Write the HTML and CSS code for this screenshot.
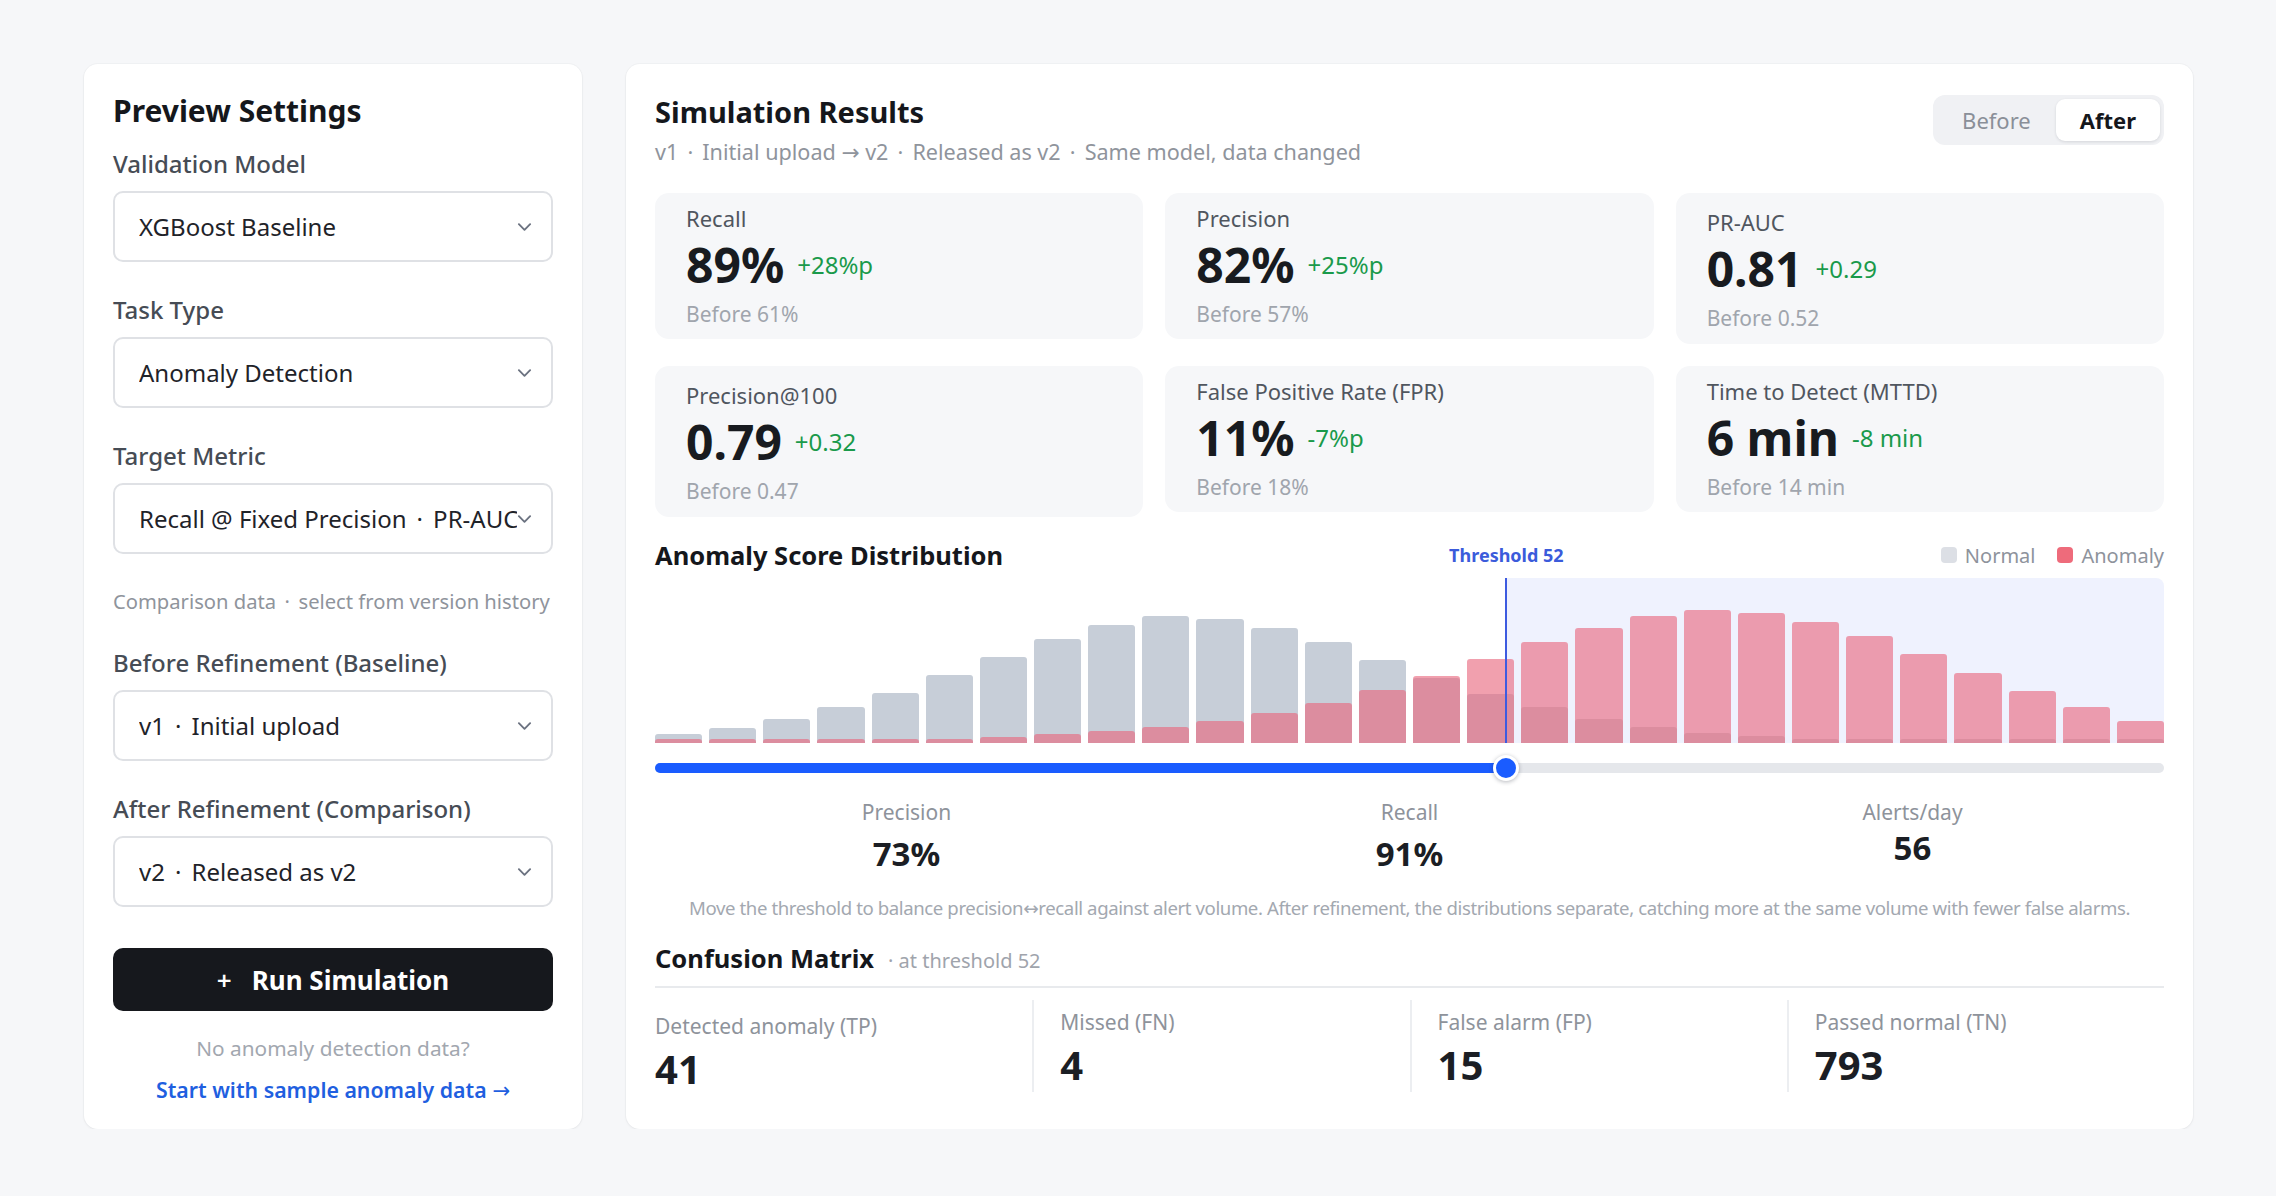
FILE: index.html
```html
<!DOCTYPE html>
<html lang="en">
<head>
<meta charset="utf-8">
<title>Simulation Preview</title>
<link rel="stylesheet" href="styles.css">
</head>
<body>
<div class="page">
  <aside class="panel settings">
    <h2 class="panel-title">Preview Settings</h2>

    <div class="field">
      <div class="field-label">Validation Model</div>
      <div class="select"><span class="select-value">XGBoost Baseline</span><svg class="chevron" viewBox="0 0 16 10"><path d="M2 2l6 6 6-6"/></svg></div>
    </div>
    <div class="field">
      <div class="field-label">Task Type</div>
      <div class="select"><span class="select-value">Anomaly Detection</span><svg class="chevron" viewBox="0 0 16 10"><path d="M2 2l6 6 6-6"/></svg></div>
    </div>
    <div class="field">
      <div class="field-label">Target Metric</div>
      <div class="select"><span class="select-value">Recall @ Fixed Precision <span class="sep">·</span> PR-AUC</span><svg class="chevron" viewBox="0 0 16 10"><path d="M2 2l6 6 6-6"/></svg></div>
    </div>

    <p class="hint">Comparison data <span class="sep">·</span> select from version history</p>

    <div class="field">
      <div class="field-label">Before Refinement (Baseline)</div>
      <div class="select"><span class="select-value">v1 <span class="sep">·</span> Initial upload</span><svg class="chevron" viewBox="0 0 16 10"><path d="M2 2l6 6 6-6"/></svg></div>
    </div>
    <div class="field">
      <div class="field-label">After Refinement (Comparison)</div>
      <div class="select"><span class="select-value">v2 <span class="sep">·</span> Released as v2</span><svg class="chevron" viewBox="0 0 16 10"><path d="M2 2l6 6 6-6"/></svg></div>
    </div>

    <button class="run-btn" type="button"><span class="run-plus">+</span>Run Simulation</button>
    <p class="empty-note">No anomaly detection data?</p>
    <a class="sample-link" href="#">Start with sample anomaly data <span class="arrow">→</span></a>
  </aside>

  <main class="panel results">
    <header class="results-head">
      <div>
        <h2 class="results-title">Simulation Results</h2>
        <p class="results-sub">v1 <span class="sep">·</span> Initial upload <span class="arrow">→</span> v2 <span class="sep">·</span> Released as v2 <span class="sep">·</span> Same model, data changed</p>
      </div>
      <div class="toggle">
        <span class="toggle-item">Before</span>
        <span class="toggle-item active">After</span>
      </div>
    </header>

    <div class="metrics">
      <div class="metric">
        <div class="metric-label">Recall</div>
        <div class="metric-main"><span class="metric-value">89%</span><span class="metric-delta">+28%p</span></div>
        <div class="metric-before">Before 61%</div>
      </div>
      <div class="metric">
        <div class="metric-label">Precision</div>
        <div class="metric-main"><span class="metric-value">82%</span><span class="metric-delta">+25%p</span></div>
        <div class="metric-before">Before 57%</div>
      </div>
      <div class="metric tall">
        <div class="metric-label">PR-AUC</div>
        <div class="metric-main"><span class="metric-value">0.81</span><span class="metric-delta">+0.29</span></div>
        <div class="metric-before">Before 0.52</div>
      </div>
      <div class="metric tall">
        <div class="metric-label">Precision@100</div>
        <div class="metric-main"><span class="metric-value">0.79</span><span class="metric-delta">+0.32</span></div>
        <div class="metric-before">Before 0.47</div>
      </div>
      <div class="metric">
        <div class="metric-label">False Positive Rate (FPR)</div>
        <div class="metric-main"><span class="metric-value">11%</span><span class="metric-delta">-7%p</span></div>
        <div class="metric-before">Before 18%</div>
      </div>
      <div class="metric">
        <div class="metric-label">Time to Detect (MTTD)</div>
        <div class="metric-main"><span class="metric-value">6 min</span><span class="metric-delta">-8 min</span></div>
        <div class="metric-before">Before 14 min</div>
      </div>
    </div>

    <section class="dist">
      <div class="dist-head">
        <h3 class="section-title">Anomaly Score Distribution</h3>
        <span class="threshold-label" style="left:56.42%">Threshold 52</span>
        <div class="legend">
          <span class="legend-item"><i class="swatch swatch-normal"></i>Normal</span>
          <span class="legend-item"><i class="swatch swatch-anomaly"></i>Anomaly</span>
        </div>
      </div>

      <div class="chart">
        <div class="chart-zone" style="left:56.42%"></div>
        <div class="bins">
          <div class="bin"><div class="bar bar-normal" style="height:9px"></div><div class="bar bar-anomaly" style="height:4px"></div></div>
          <div class="bin"><div class="bar bar-normal" style="height:15px"></div><div class="bar bar-anomaly" style="height:4px"></div></div>
          <div class="bin"><div class="bar bar-normal" style="height:24px"></div><div class="bar bar-anomaly" style="height:4px"></div></div>
          <div class="bin"><div class="bar bar-normal" style="height:36px"></div><div class="bar bar-anomaly" style="height:4px"></div></div>
          <div class="bin"><div class="bar bar-normal" style="height:50px"></div><div class="bar bar-anomaly" style="height:4px"></div></div>
          <div class="bin"><div class="bar bar-normal" style="height:68px"></div><div class="bar bar-anomaly" style="height:4px"></div></div>
          <div class="bin"><div class="bar bar-normal" style="height:86px"></div><div class="bar bar-anomaly" style="height:6px"></div></div>
          <div class="bin"><div class="bar bar-normal" style="height:104px"></div><div class="bar bar-anomaly" style="height:9px"></div></div>
          <div class="bin"><div class="bar bar-normal" style="height:118px"></div><div class="bar bar-anomaly" style="height:12px"></div></div>
          <div class="bin"><div class="bar bar-normal" style="height:127px"></div><div class="bar bar-anomaly" style="height:16px"></div></div>
          <div class="bin"><div class="bar bar-normal" style="height:124px"></div><div class="bar bar-anomaly" style="height:22px"></div></div>
          <div class="bin"><div class="bar bar-normal" style="height:115px"></div><div class="bar bar-anomaly" style="height:30px"></div></div>
          <div class="bin"><div class="bar bar-normal" style="height:101px"></div><div class="bar bar-anomaly" style="height:40px"></div></div>
          <div class="bin"><div class="bar bar-normal" style="height:83px"></div><div class="bar bar-anomaly" style="height:53px"></div></div>
          <div class="bin"><div class="bar bar-normal" style="height:65px"></div><div class="bar bar-anomaly" style="height:67px"></div></div>
          <div class="bin"><div class="bar bar-normal" style="height:49px"></div><div class="bar bar-anomaly" style="height:84px"></div></div>
          <div class="bin"><div class="bar bar-normal" style="height:36px"></div><div class="bar bar-anomaly" style="height:101px"></div></div>
          <div class="bin"><div class="bar bar-normal" style="height:24px"></div><div class="bar bar-anomaly" style="height:115px"></div></div>
          <div class="bin"><div class="bar bar-normal" style="height:16px"></div><div class="bar bar-anomaly" style="height:127px"></div></div>
          <div class="bin"><div class="bar bar-normal" style="height:10px"></div><div class="bar bar-anomaly" style="height:133px"></div></div>
          <div class="bin"><div class="bar bar-normal" style="height:7px"></div><div class="bar bar-anomaly" style="height:130px"></div></div>
          <div class="bin"><div class="bar bar-normal" style="height:4px"></div><div class="bar bar-anomaly" style="height:121px"></div></div>
          <div class="bin"><div class="bar bar-normal" style="height:4px"></div><div class="bar bar-anomaly" style="height:107px"></div></div>
          <div class="bin"><div class="bar bar-normal" style="height:4px"></div><div class="bar bar-anomaly" style="height:89px"></div></div>
          <div class="bin"><div class="bar bar-normal" style="height:4px"></div><div class="bar bar-anomaly" style="height:70px"></div></div>
          <div class="bin"><div class="bar bar-normal" style="height:4px"></div><div class="bar bar-anomaly" style="height:52px"></div></div>
          <div class="bin"><div class="bar bar-normal" style="height:4px"></div><div class="bar bar-anomaly" style="height:36px"></div></div>
          <div class="bin"><div class="bar bar-normal" style="height:4px"></div><div class="bar bar-anomaly" style="height:22px"></div></div>
        </div>
        <div class="threshold-line" style="left:56.42%"></div>
      </div>

      <div class="slider">
        <div class="slider-track"></div>
        <div class="slider-fill" style="width:56.42%"></div>
        <div class="slider-thumb" style="left:56.42%"></div>
      </div>

      <div class="stats">
        <div class="stat"><div class="stat-label">Precision</div><div class="stat-value">73%</div></div>
        <div class="stat"><div class="stat-label">Recall</div><div class="stat-value">91%</div></div>
        <div class="stat"><div class="stat-label">Alerts/day</div><div class="stat-value plain">56</div></div>
      </div>

      <p class="dist-note">Move the threshold to balance precision<span class="arrow">↔</span>recall against alert volume. After refinement, the distributions separate, catching more at the same volume with fewer false alarms.</p>
    </section>

    <section class="matrix">
      <div class="matrix-head">
        <h3 class="section-title">Confusion Matrix</h3>
        <span class="matrix-sub">· at threshold 52</span>
      </div>
      <div class="matrix-grid">
        <div class="cell first"><div class="cell-label">Detected anomaly (TP)</div><div class="cell-value">41</div></div>
        <div class="cell"><div class="cell-label">Missed (FN)</div><div class="cell-value">4</div></div>
        <div class="cell"><div class="cell-label">False alarm (FP)</div><div class="cell-value">15</div></div>
        <div class="cell"><div class="cell-label">Passed normal (TN)</div><div class="cell-value">793</div></div>
      </div>
    </section>
  </main>
</div>
</body>
</html>
```

FILE: styles.css
```css
* {
  box-sizing: border-box;
  margin: 0;
  padding: 0;
}

body {
  background: #f6f7f9;
  font-family: "Noto Sans", "Open Sans", sans-serif;
  color: #1b1e24;
}

/* separators and arrows inside running text */
.sep {
  margin: 0 0.16em;
}

.arrow {
  font-family: "DejaVu Sans", sans-serif;
  font-weight: 400;
}

/* two-panel layout */
.page {
  display: flex;
  gap: 44px;
  height: 1129px;
  padding: 64px 83px 0 84px;
}

.panel {
  background: #ffffff;
  border-radius: 14px;
  box-shadow: 0 1px 3px rgba(16, 24, 40, 0.05), 0 0 0 1px rgba(16, 24, 40, 0.025);
}

/* ---------- settings panel ---------- */
.settings {
  width: 498px;
  flex: none;
  display: flex;
  flex-direction: column;
  padding: 27px 29px 0;
}

.panel-title {
  font-size: 30px;
  line-height: 40px;
  font-weight: 700;
  color: #15171c;
  margin-bottom: 17px;
}

.field {
  margin-bottom: 32px;
}

.field-label {
  font-size: 24px;
  line-height: 32px;
  font-weight: 500;
  color: #464c55;
  margin-bottom: 11px;
}

.select {
  height: 71px;
  border: 2px solid #dfe1e5;
  border-radius: 10px;
  display: flex;
  align-items: center;
  padding: 0 19px 0 24px;
}

.select-value {
  flex: 1;
  font-size: 24px;
  color: #1f2329;
  white-space: nowrap;
  overflow: hidden;
}

.chevron {
  width: 15px;
  height: 10px;
  flex: none;
  fill: none;
  stroke: #6b7280;
  stroke-width: 2;
  stroke-linecap: round;
  stroke-linejoin: round;
}

.hint {
  font-size: 20.2px;
  line-height: 28px;
  color: #8f949c;
  margin-top: 1px;
  margin-bottom: 32px;
}

.run-btn {
  margin-top: 9px;
  height: 63px;
  border: none;
  border-radius: 10px;
  background: #16181d;
  color: #ffffff;
  font-family: inherit;
  font-size: 26px;
  font-weight: 700;
  display: flex;
  align-items: center;
  justify-content: center;
}

.run-plus {
  font-weight: 600;
  margin-right: 20px;
}

.empty-note {
  margin-top: 23px;
  font-size: 20.8px;
  line-height: 28px;
  color: #a2a7af;
  text-align: center;
}

.sample-link {
  margin-top: 13px;
  font-size: 21.3px;
  line-height: 30px;
  font-weight: 600;
  color: #1f5fe0;
  text-align: center;
  text-decoration: none;
}

/* ---------- results panel ---------- */
.results {
  flex: 1;
  min-width: 0;
  padding: 29px 29px 0;
}

.results-head {
  display: flex;
  justify-content: space-between;
  align-items: flex-start;
}

.results-title {
  font-size: 29px;
  line-height: 38px;
  font-weight: 700;
  color: #15171c;
}

.results-sub {
  margin-top: 6px;
  font-size: 21.6px;
  line-height: 30px;
  color: #8f949c;
}

.toggle {
  margin-top: 2px;
  display: flex;
  padding: 4px;
  background: #f0f1f4;
  border-radius: 12px;
}

.toggle-item {
  height: 42px;
  line-height: 42px;
  padding: 0 25px;
  font-size: 22px;
  color: #8a8f98;
  border-radius: 9px;
}

.toggle-item.active {
  background: #ffffff;
  color: #15171c;
  font-weight: 700;
  padding: 0 24px;
  box-shadow: 0 1px 3px rgba(16, 24, 40, 0.12);
}

/* metric cards */
.metrics {
  margin-top: 25px;
  display: grid;
  grid-template-columns: repeat(3, 1fr);
  gap: 22px;
  align-items: start;
}

.metric {
  background: #f6f7f9;
  border-radius: 14px;
  padding: 10px 31px 11px;
}

.metric.tall {
  padding-top: 14px;
  padding-bottom: 12px;
}

.metric-label {
  font-size: 22px;
  line-height: 30px;
  color: #50565f;
}

.metric-main {
  margin-top: 4px;
  display: flex;
  align-items: center;
  gap: 13px;
}

.metric-value {
  font-size: 48px;
  line-height: 56px;
  font-weight: 700;
  color: #181b20;
}

.metric-delta {
  font-size: 24px;
  line-height: 30px;
  color: #1a9a4b;
}

.metric-before {
  margin-top: 7px;
  font-size: 21px;
  line-height: 28px;
  color: #a0a5ad;
}

/* distribution */
.dist {
  margin-top: 21px;
}

.dist-head {
  position: relative;
  display: flex;
  justify-content: space-between;
  align-items: center;
  height: 34px;
}

.section-title {
  font-size: 25.5px;
  line-height: 34px;
  font-weight: 700;
  color: #15171c;
}

.threshold-label {
  position: absolute;
  top: 50%;
  transform: translate(-50%, -50%);
  font-size: 18px;
  font-weight: 700;
  color: #3b5bdb;
  white-space: nowrap;
}

.legend {
  display: flex;
  gap: 22px;
  font-size: 20px;
  color: #8e939c;
}

.legend-item {
  display: flex;
  align-items: center;
  gap: 8px;
}

.swatch {
  width: 16px;
  height: 16px;
  border-radius: 4px;
}

.swatch-normal {
  background: #dcdfe5;
}

.swatch-anomaly {
  background: #ee6b7b;
}

.chart {
  position: relative;
  margin-top: 6px;
  height: 165px;
}

.chart-zone {
  position: absolute;
  top: 0;
  right: 0;
  bottom: 0;
  background: #eff2fe;
  border-radius: 0 8px 0 0;
}

.bins {
  position: relative;
  height: 100%;
  display: grid;
  grid-template-columns: repeat(28, 1fr);
  column-gap: 7px;
}

.bin {
  position: relative;
  height: 100%;
}

.bar {
  position: absolute;
  left: 0;
  right: 0;
  bottom: 0;
  border-radius: 3px 3px 0 0;
}

.bar-normal {
  background: #c7ced8;
}

.bar-anomaly {
  background: rgba(233, 102, 124, 0.62);
}

.threshold-line {
  position: absolute;
  top: 0;
  bottom: 0;
  width: 2px;
  margin-left: -1px;
  background: #3d5be0;
}

.slider {
  position: relative;
  margin-top: 12px;
  height: 26px;
}

.slider-track,
.slider-fill {
  position: absolute;
  top: 8px;
  left: 0;
  height: 10px;
  border-radius: 5px;
}

.slider-track {
  right: 0;
  background: #e5e7eb;
}

.slider-fill {
  background: #1a5cff;
}

.slider-thumb {
  position: absolute;
  top: 0;
  width: 26px;
  height: 26px;
  transform: translateX(-50%);
  border-radius: 50%;
  background: #1a5cff;
  border: 3px solid #ffffff;
  box-shadow: 0 1px 4px rgba(16, 24, 40, 0.3);
}

.stats {
  margin-top: 17px;
  display: grid;
  grid-template-columns: repeat(3, 1fr);
  text-align: center;
}

.stat-label {
  font-size: 21px;
  line-height: 28px;
  color: #8e939b;
}

.stat-value {
  margin-top: 8px;
  font-size: 33px;
  line-height: 40px;
  font-weight: 700;
  color: #1b1e24;
}

.stat-value.plain {
  margin-top: 2px;
}

.dist-note {
  margin-top: 20px;
  font-size: 18.6px;
  letter-spacing: -0.4px;
  line-height: 28px;
  color: #a3a8b0;
  text-align: center;
  white-space: nowrap;
}

/* confusion matrix */
.matrix {
  margin-top: 18px;
}

.matrix-head {
  display: flex;
  align-items: baseline;
  padding-bottom: 11px;
  border-bottom: 2px solid #e8eaed;
}

.matrix-sub {
  margin-left: 14px;
  font-size: 20px;
  color: #9fa4ac;
}

.matrix-grid {
  margin-top: 12px;
  display: grid;
  grid-template-columns: repeat(4, 1fr);
}

.cell {
  padding: 8px 0 2px 26px;
  border-left: 2px solid #eceef1;
}

.cell.first {
  padding: 12px 0 0 0;
  border-left: none;
}

.cell-label {
  font-size: 21px;
  line-height: 28px;
  color: #8e939b;
}

.cell-value {
  margin-top: 6px;
  font-size: 40px;
  line-height: 46px;
  font-weight: 700;
  color: #1b1e24;
}
```
